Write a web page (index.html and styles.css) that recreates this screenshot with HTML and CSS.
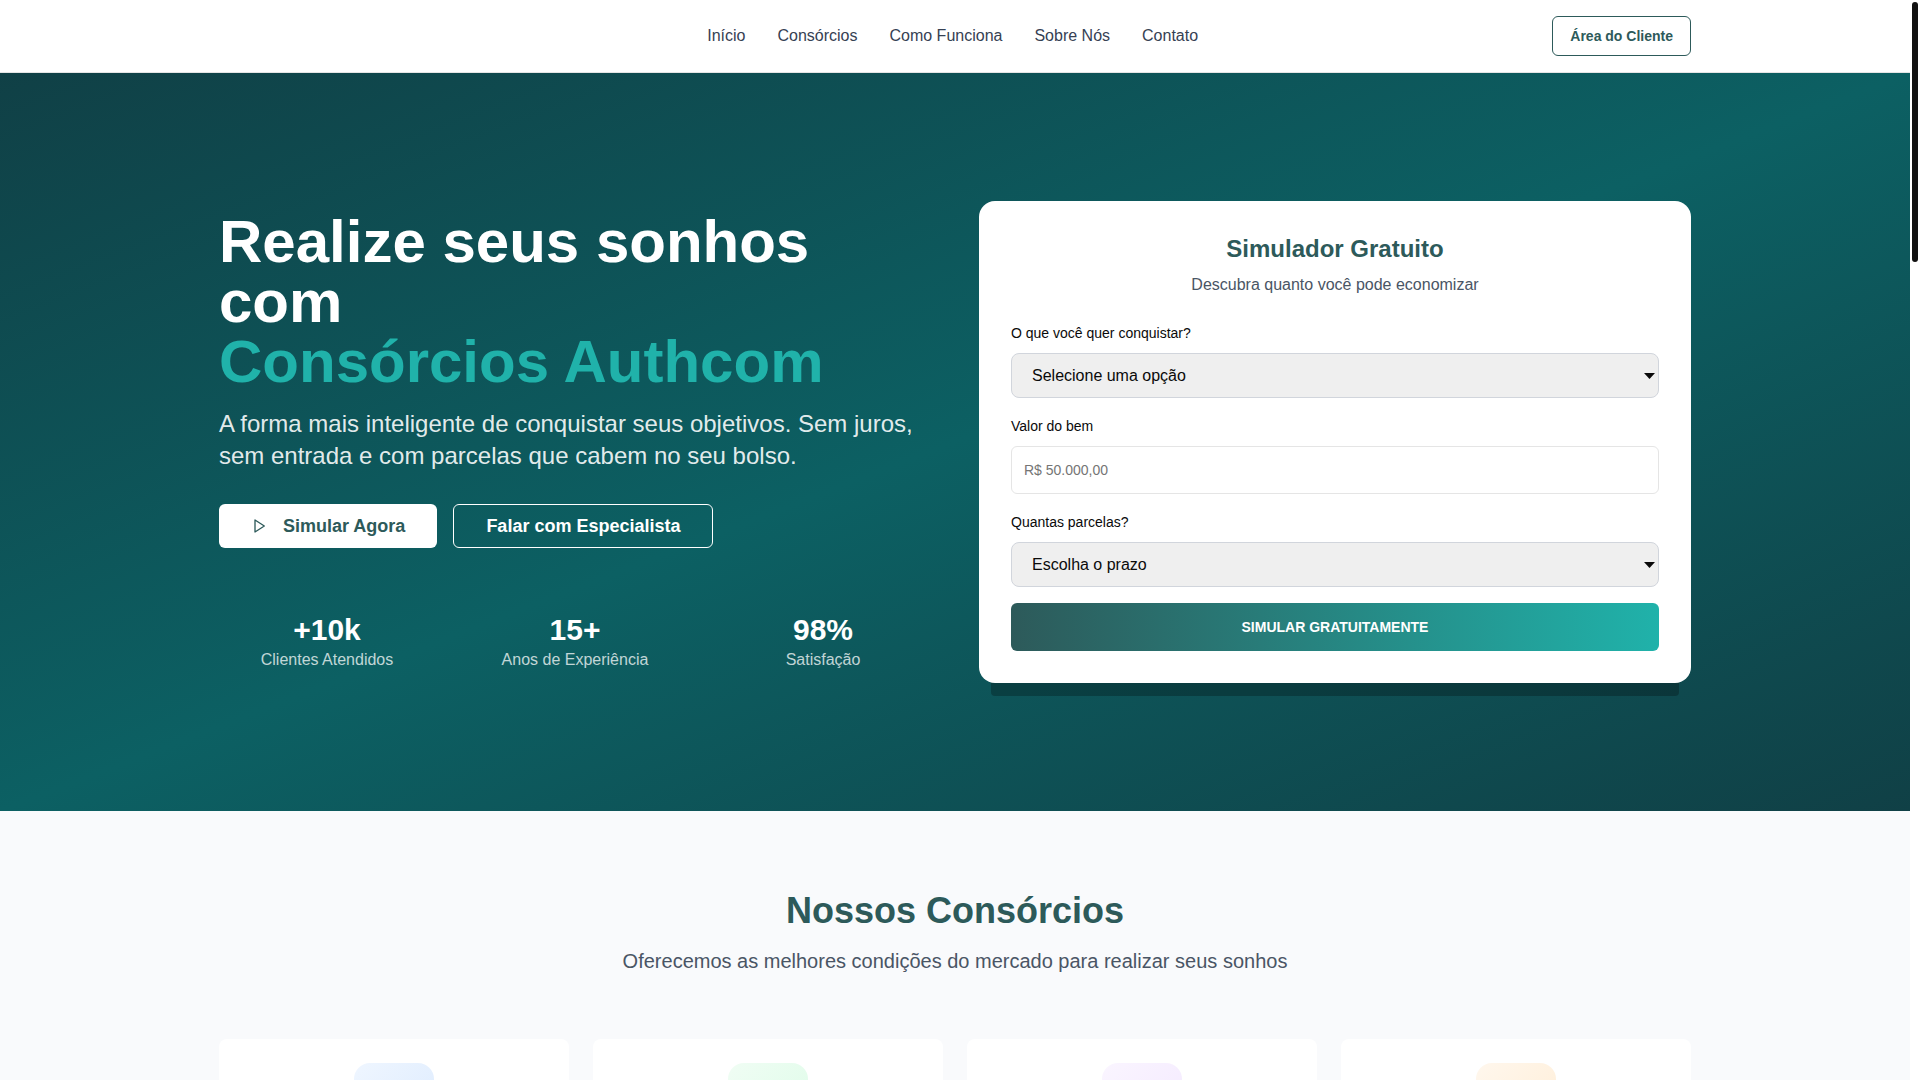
FILE: index.html
```
<!DOCTYPE html>
<html lang="pt-BR">
<head>
    <meta charset="UTF-8">
    <meta name="viewport" content="width=device-width, initial-scale=1.0">
    <title>Consórcios Authcom</title>
    <link rel="stylesheet" href="styles.css">
</head>
<body>
    <header class="header">
        <div class="container header-content">
            <div class="logo"></div>
            <nav class="nav">
                <a href="#inicio">Início</a>
                <a href="#consorcios">Consórcios</a>
                <a href="#como-funciona">Como Funciona</a>
                <a href="#sobre">Sobre Nós</a>
                <a href="#contato">Contato</a>
            </nav>
            <button type="button" class="btn-client">Área do Cliente</button>
        </div>
    </header>

    <main>
        <section class="hero" id="inicio">
            <div class="container hero-grid">
                <div class="hero-text">
                    <h1>Realize seus sonhos com <span>Consórcios Authcom</span></h1>
                    <p class="lead">A forma mais inteligente de conquistar seus objetivos. Sem juros, sem entrada e com parcelas que cabem no seu bolso.</p>
                    <div class="hero-buttons">
                        <button type="button" class="btn btn-white">
                            <svg width="16" height="16" viewBox="0 0 24 24" fill="none" stroke="currentColor" stroke-width="2" stroke-linecap="round" stroke-linejoin="round"><polygon points="6 3 20 12 6 21 6 3"/></svg>
                            Simular Agora
                        </button>
                        <button type="button" class="btn btn-outline">Falar com Especialista</button>
                    </div>
                    <div class="stats">
                        <div>
                            <div class="stat-number">+10k</div>
                            <div class="stat-label">Clientes Atendidos</div>
                        </div>
                        <div>
                            <div class="stat-number">15+</div>
                            <div class="stat-label">Anos de Experiência</div>
                        </div>
                        <div>
                            <div class="stat-number">98%</div>
                            <div class="stat-label">Satisfação</div>
                        </div>
                    </div>
                </div>

                <form class="simulator">
                    <div class="simulator-header">
                        <h3>Simulador Gratuito</h3>
                        <p>Descubra quanto você pode economizar</p>
                    </div>
                    <div class="field">
                        <label for="objetivo">O que você quer conquistar?</label>
                        <select id="objetivo">
                            <option>Selecione uma opção</option>
                        </select>
                    </div>
                    <div class="field">
                        <label for="valor">Valor do bem</label>
                        <input type="text" id="valor" placeholder="R$ 50.000,00">
                    </div>
                    <div class="field">
                        <label for="parcelas">Quantas parcelas?</label>
                        <select id="parcelas">
                            <option>Escolha o prazo</option>
                        </select>
                    </div>
                    <button type="button" class="btn-simulate">SIMULAR GRATUITAMENTE</button>
                </form>
            </div>
        </section>

        <section class="products" id="consorcios">
            <div class="container">
                <div class="section-header">
                    <h2>Nossos Consórcios</h2>
                    <p>Oferecemos as melhores condições do mercado para realizar seus sonhos</p>
                </div>
                <div class="cards">
                    <article class="card"><div class="card-icon blue"></div></article>
                    <article class="card"><div class="card-icon green"></div></article>
                    <article class="card"><div class="card-icon purple"></div></article>
                    <article class="card"><div class="card-icon orange"></div></article>
                </div>
            </div>
        </section>
    </main>

    <div class="scrollbar"><div class="scrollbar-thumb"></div></div>
</body>
</html>
```

FILE: styles.css
```
* {
    box-sizing: border-box;
    margin: 0;
    padding: 0;
}
body {
    font-family: "Liberation Sans", Arial, sans-serif;
    font-size: 16px;
    line-height: 24px;
    color: #0a0a0a;
    background-color: #fff;
    height: 100vh;
    overflow: hidden;
    padding-right: 10px;
}
button, input, select {
    font-family: inherit;
}
button {
    cursor: pointer;
}
.container {
    max-width: 1536px;
    margin: 0 auto;
    padding: 0 32px;
}

/* Header */
.header {
    background-color: #fff;
    border-bottom: 1px solid #e5e5e5;
}
.header-content {
    display: flex;
    justify-content: space-between;
    align-items: center;
    padding-top: 16px;
    padding-bottom: 16px;
}
.logo {
    width: 134px;
    height: 40px;
}
.nav {
    display: flex;
    gap: 32px;
}
.nav a {
    color: #364153;
    text-decoration: none;
}
.btn-client {
    height: 40px;
    padding: 0 17px;
    font-size: 14px;
    font-weight: bold;
    color: #2d5a5a;
    background-color: #fff;
    border: 1px solid #2d5a5a;
    border-radius: 6px;
}

/* Hero */
.hero {
    padding: 128px 0;
    color: #fff;
    background: linear-gradient(to bottom right, #104046, #0c6063, #104046);
}
.hero-grid {
    display: grid;
    grid-template-columns: 1fr 1fr;
    gap: 48px;
    align-items: center;
}
.hero h1 {
    font-size: 60px;
    line-height: 60px;
    margin-bottom: 16px;
}
.hero h1 span {
    display: block;
    color: #20b2aa;
}
.lead {
    font-size: 24px;
    line-height: 32px;
    color: rgba(255, 255, 255, 0.9);
    margin-bottom: 32px;
}
.hero-buttons {
    display: flex;
    gap: 16px;
    margin-bottom: 64px;
}
.btn {
    display: flex;
    align-items: center;
    gap: 16px;
    height: 44px;
    padding: 0 32px;
    font-size: 18px;
    font-weight: bold;
    border: none;
    border-radius: 6px;
}
.btn-white {
    color: #2d5a5a;
    background-color: #fff;
}
.btn-outline {
    color: #fff;
    background-color: transparent;
    border: 1px solid #fff;
}
.stats {
    display: grid;
    grid-template-columns: repeat(3, 1fr);
    gap: 32px;
    text-align: center;
}
.stat-number {
    font-size: 30px;
    line-height: 36px;
    font-weight: bold;
}
.stat-label {
    color: rgba(255, 255, 255, 0.75);
}

/* Simulador */
.simulator {
    display: flex;
    flex-direction: column;
    gap: 16px;
    padding: 32px;
    color: #0a0a0a;
    background-color: #fff;
    border-radius: 16px;
    box-shadow: 0 25px 0 -12px rgba(0, 0, 0, 0.25);
}
.simulator-header {
    text-align: center;
    margin-bottom: 8px;
}
.simulator-header h3 {
    font-size: 24px;
    line-height: 32px;
    color: #2d5a5a;
    margin-bottom: 8px;
}
.simulator-header p {
    color: #4a5565;
}
.field label {
    display: block;
    font-size: 14px;
    margin-bottom: 8px;
}
.field select,
.field input {
    display: block;
    width: 100%;
    border: 1px solid #d1d5dc;
}
.field select {
    appearance: none;
    height: 45px;
    padding: 0 20px;
    font-size: 16px;
    color: #0a0a0a;
    background: #efefef url("data:image/svg+xml,%3Csvg xmlns='http://www.w3.org/2000/svg' width='11' height='6'%3E%3Cpath d='M0 0h11L5.5 6z' fill='%230a0a0a'/%3E%3C/svg%3E") no-repeat right 3px center;
    border-radius: 8px;
}
.field input {
    height: 48px;
    padding: 8px 12px;
    font-size: 14px;
    border-color: #e5e5e5;
    border-radius: 6px;
}
.btn-simulate {
    height: 48px;
    font-size: 14px;
    font-weight: bold;
    color: #fff;
    background: linear-gradient(to right, #2d5a5a, #20b2aa);
    border: none;
    border-radius: 6px;
}

/* Consórcios */
.products {
    padding: 80px 0;
    background-color: #f9fafc;
}
.section-header {
    text-align: center;
    margin-bottom: 64px;
}
.section-header h2 {
    font-size: 36px;
    line-height: 40px;
    color: #2d5a5a;
    margin-bottom: 16px;
}
.section-header p {
    font-size: 20px;
    line-height: 28px;
    color: #4a5565;
}
.cards {
    display: grid;
    grid-template-columns: repeat(4, 1fr);
    gap: 24px;
}
.card {
    padding: 24px;
    background-color: #fff;
    border-radius: 8px;
}
.card-icon {
    width: 80px;
    height: 80px;
    margin: 0 auto;
    border-radius: 16px;
}
.blue {
    background: linear-gradient(to bottom right, #eff6ff, #dbeafe);
}
.green {
    background: linear-gradient(to bottom right, #f0fdf4, #dcfce7);
}
.purple {
    background: linear-gradient(to bottom right, #faf5ff, #f3e8ff);
}
.orange {
    background: linear-gradient(to bottom right, #fff7ed, #ffedd5);
}

/* Barra de rolagem */
.scrollbar {
    position: fixed;
    top: 0;
    right: 0;
    bottom: 0;
    width: 10px;
    padding: 2px;
    background-color: #fff;
}
.scrollbar-thumb {
    height: 260px;
    background-color: #111;
    border-radius: 3px;
}
```
